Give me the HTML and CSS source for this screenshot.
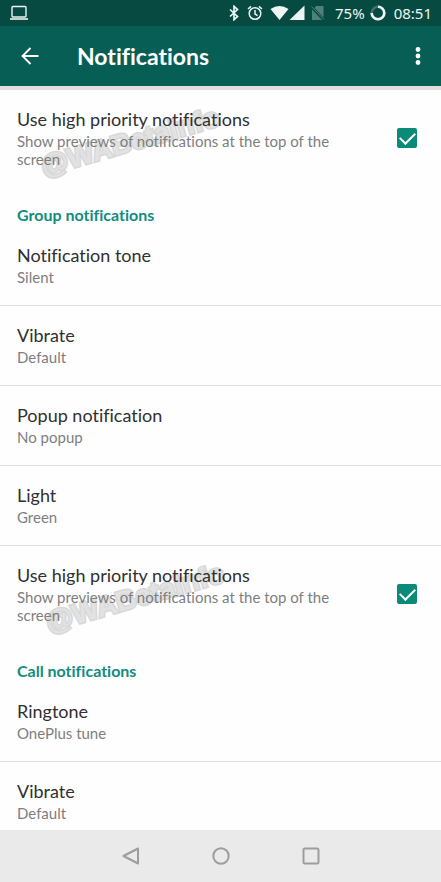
FILE: index.html
```html
<!DOCTYPE html>
<html lang="en">
<head>
<meta charset="utf-8">
<meta name="viewport" content="width=device-width, initial-scale=1">
<title>Notifications</title>
<link rel="stylesheet" href="styles.css">
</head>
<body>
<div class="status">
  <svg class="laptop" width="20" height="16" viewBox="0 0 20 16" fill="none" stroke="currentColor"><rect x="3" y="1.5" width="14" height="10.5" rx="1" stroke-width="1.4"/><path d="M1 14h18" stroke-width="1.6"/></svg>
  <div class="indicators">
    <svg width="10" height="16" viewBox="0 0 10 16" fill="none" stroke="currentColor" stroke-width="1.7"><path d="M1 4.5l7.5 7L5 14.700V1.300l3.500 3.200L1 11.500"/></svg>
    <svg class="alarm" width="16" height="16" viewBox="0 0 16 16" fill="none" stroke="currentColor" stroke-width="1.5"><circle cx="8" cy="8.500" r="5.800"/><path d="M8 5v4l2.600 1.600M1 4l3-2.600M15 4l-3-2.600"/></svg>
    <svg class="wifi" width="19" height="16" viewBox="0 0 19 16" fill="currentColor"><path d="M.5 4Q9.500-2 18.500 4L9.500 15z"/></svg>
    <svg width="16" height="16" viewBox="0 0 16 16" fill="currentColor"><path d="M15.500.5V15H.5z"/></svg>
    <svg class="nosim" width="14" height="16" viewBox="0 0 14 16" fill="#4d827a"><path d="M5 1h7.500v11.500L3.500 3zM1 4.500L11 15H1z"/><path d="M.5 1.500l12.500 13" fill="none" stroke="#4d827a"/></svg>
    <span class="battery">75%</span>
    <svg class="ring" width="16" height="16" viewBox="0 0 16 16" fill="none" stroke-width="2.600"><circle cx="8" cy="8" r="6.300" stroke="#3d756d"/><path d="M8 1.700A6.300 6.300 0 1 1 1.700 8" stroke="currentColor"/></svg>
    <span>08:51</span>
  </div>
</div>
<header class="appbar">
  <button class="back" aria-label="Back"><svg width="20" height="20" viewBox="0 0 20 20" fill="none" stroke="currentColor" stroke-width="1.800"><path d="M18.500 10H2.500M10.500 2l-8 8 8 8"/></svg></button>
  <h1>Notifications</h1>
  <button class="more" aria-label="More options"><svg width="6" height="20" viewBox="0 0 6 20" fill="currentColor"><circle cx="3" cy="3.500" r="2.400"/><circle cx="3" cy="10" r="2.400"/><circle cx="3" cy="16.500" r="2.400"/></svg></button>
</header>
<main class="settings">
  <section>
    <label class="item toggle">
      <span class="watermark">@WABetaInfo</span>
      <span class="copy"><span class="title">Use high priority notifications</span><span class="sub">Show previews of notifications at the top of the screen</span></span>
      <input type="checkbox" checked>
    </label>
  </section>
  <section>
    <h2>Group notifications</h2>
    <a class="item" href="#"><span class="title">Notification tone</span><span class="sub">Silent</span></a>
    <a class="item" href="#"><span class="title">Vibrate</span><span class="sub">Default</span></a>
    <a class="item" href="#"><span class="title">Popup notification</span><span class="sub">No popup</span></a>
    <a class="item" href="#"><span class="title">Light</span><span class="sub">Green</span></a>
    <label class="item toggle">
      <span class="watermark lower">@WABetaInfo</span>
      <span class="copy"><span class="title">Use high priority notifications</span><span class="sub">Show previews of notifications at the top of the screen</span></span>
      <input type="checkbox" checked>
    </label>
  </section>
  <section>
    <h2>Call notifications</h2>
    <a class="item" href="#"><span class="title">Ringtone</span><span class="sub">OnePlus tune</span></a>
    <a class="item" href="#"><span class="title">Vibrate</span><span class="sub">Default</span></a>
  </section>
</main>
<nav class="navbar">
  <button aria-label="Back"><svg width="18" height="18" viewBox="0 0 18 18"><path d="M16 1.500v15L1.500 9z"/></svg></button>
  <button aria-label="Home"><svg width="18" height="18" viewBox="0 0 18 18"><circle cx="9" cy="9" r="7.700"/></svg></button>
  <button aria-label="Recent apps"><svg width="18" height="18" viewBox="0 0 18 18"><rect x="1.500" y="1.500" width="15" height="15" rx="1.500"/></svg></button>
</nav>
</body>
</html>
```
FILE: styles.css
```css
* { box-sizing: border-box; }
body {
  margin: 0;
  height: 100vh;
  display: flex;
  flex-direction: column;
  font-family: Lato, sans-serif;
  font-variant-ligatures: none;
  background: #fefefe;
  color: #303030;
}
svg { display: block; flex: none; }
button {
  padding: 0;
  border: 0;
  background: none;
  color: inherit;
}
.status {
  flex: none;
  height: 26px;
  padding: 0 9px;
  display: flex;
  align-items: center;
  justify-content: space-between;
  background: #064a41;
  color: #edf6f4;
  font-family: "Noto Sans", sans-serif;
  font-size: 15px;
}
.indicators { display: flex; align-items: center; }
.alarm { margin-left: 8px; }
.wifi { margin-left: 7px; }
.nosim { margin-left: 6px; }
.battery { margin-left: 10px; }
.ring { margin: 0 8px 0 5px; }
.appbar {
  flex: none;
  height: 60px;
  padding: 0 20px;
  display: flex;
  align-items: center;
  background: #075e54;
  color: #fff;
}
.appbar h1 {
  flex: 1;
  margin: 0 0 0 37px;
  font-size: 23px;
  line-height: 28px;
  font-weight: 700;
}
.settings {
  flex: 1;
  min-height: 0;
  overflow: hidden;
  border-top: 4px solid #e2dede;
}
.item {
  display: block;
  position: relative;
  padding: 18px 17px 19px;
  border-bottom: 1px solid #e2e2e2;
  color: inherit;
  text-decoration: none;
}
.toggle {
  display: flex;
  align-items: center;
  justify-content: space-between;
  border-bottom-color: transparent;
}
.copy { position: relative; max-width: 325px; }
.title {
  display: block;
  font-size: 18px;
  line-height: 22px;
}
.sub {
  display: block;
  margin-top: 2px;
  font-size: 15px;
  line-height: 18px;
  color: #7e7e7e;
}
h2 {
  margin: 0;
  padding: 18px 17px 2px;
  font-size: 16px;
  line-height: 18px;
  font-weight: 700;
  color: #128c7e;
}
.toggle input {
  appearance: none;
  flex: none;
  width: 20px;
  height: 20px;
  margin: 0 7px 0 0;
  border-radius: 2px;
  background: #0b8a78;
  display: grid;
  place-items: center;
}
.toggle input::before {
  content: "";
  width: 13px;
  height: 7px;
  margin-bottom: 4px;
  border: solid #fff;
  border-width: 0 0 2px 2px;
  transform: rotate(-45deg);
}
.watermark {
  position: absolute;
  left: 38px;
  top: 36px;
  font: bold 28px/32px "Liberation Sans", sans-serif;
  color: #e2e2e2;
  -webkit-text-stroke: 3px #d8d8d8;
  paint-order: stroke fill;
  transform: rotate(-16deg);
}
.watermark.lower { left: 43px; }
.navbar {
  flex: none;
  height: 52px;
  display: flex;
  align-items: center;
  justify-content: center;
  gap: 72px;
  background: #eaeaea;
}
.navbar svg {
  fill: none;
  stroke: #9d9d9d;
  stroke-width: 2;
  stroke-linejoin: round;
}
```
